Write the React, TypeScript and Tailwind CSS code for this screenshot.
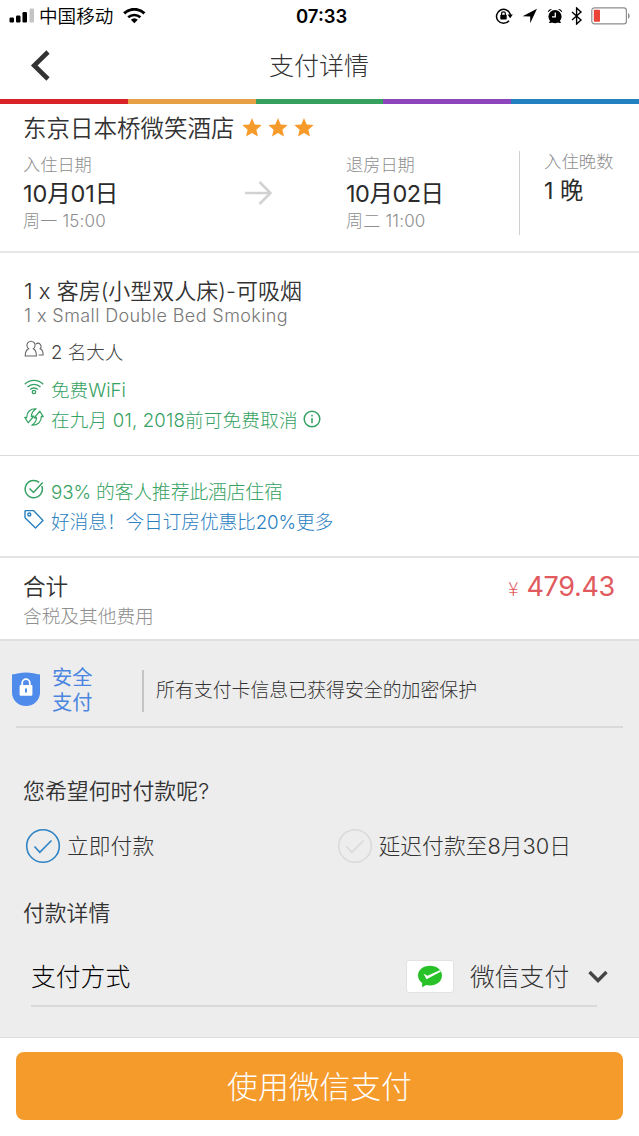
import React from "react";

function StatusBar() {
  return (
    <div className="flex h-8 items-center text-black">
      <svg className="ml-[9px] h-4 w-[25px]" viewBox="0 0 25 16">
        <rect x="0.5" y="9.5" width="4.5" height="5" rx="1.2" />
        <rect x="7" y="7.5" width="4.5" height="7" rx="1.2" />
        <rect x="13.5" y="4" width="4.5" height="10.5" rx="1.2" />
        <rect x="20.5" y="0.5" width="4.5" height="14" rx="1.2" fill="#c4c4c4" />
      </svg>
      <span className="ml-[5px] w-[75px] whitespace-nowrap text-[18.6px] leading-8 font-[350]">中国移动</span>
      <svg className="ml-[9px] h-4 w-6" viewBox="0 0 24 16" fill="none" stroke="#000">
        <path d="M1.2 5.4a14.6 14.6 0 0 1 20.2 0" strokeWidth="3" />
        <path d="M5.2 9.3a9.2 9.2 0 0 1 12.2 0" strokeWidth="2.6" />
        <path d="M11.3 15.2 7.8 11.8a5.2 5.2 0 0 1 7 0z" fill="#000" stroke="none" />
      </svg>
      <span className="ml-[149px] w-[57px] whitespace-nowrap text-[18.5px] leading-8 font-semibold">07:33</span>
      <svg className="ml-[142px] h-[18px] w-[18px]" viewBox="0 0 18 18" fill="none" stroke="#000">
        <path d="M14 13.7A7 7 0 1 1 15.4 8" strokeWidth="1.5" />
        <path d="M12.6 7.6h5.2l-2.6 3.6z" fill="#000" stroke="none" />
        <rect x="5.3" y="7.8" width="6.4" height="4.6" rx="0.6" fill="#000" stroke="none" />
        <path d="M6.6 8V6.8a1.9 1.9 0 0 1 3.8 0V8" strokeWidth="1.2" />
      </svg>
      <svg className="ml-[9px] h-4 w-4" viewBox="0 0 16 16">
        <path d="M15 0.8 8.2 15.2V8.6L0.6 8.3z" />
      </svg>
      <svg className="ml-[9px] h-4 w-4" viewBox="0 0 16 16">
        <circle cx="8" cy="8.6" r="6.6" />
        <path d="M0.8 4.6A4 4 0 0 1 5 1zM15.2 4.6A4 4 0 0 0 11 1z" />
        <path d="M3.2 12.5 2 15h3zM12.8 12.5 14 15h-3z" />
        <path d="M8.3 4.4v4.4H5" stroke="#fff" strokeWidth="1.3" fill="none" />
      </svg>
      <svg className="ml-2 h-[18px] w-3" viewBox="0 0 12 18" fill="none" stroke="#000" strokeWidth="1.4">
        <path d="m1 5 9 8-4.4 4V1L10 5l-9 8" />
      </svg>
      <svg className="ml-2 h-[18px] w-10" viewBox="0 0 40 18">
        <rect x="0.8" y="0.8" width="34.6" height="16" rx="2.6" fill="none" stroke="#8f8f8f" strokeWidth="1.2" />
        <rect x="2.8" y="2.8" width="6.2" height="12" rx="0.8" fill="#ea4438" />
        <path d="M37 6c2.2.8 2.2 5 0 5.8z" fill="#8f8f8f" />
      </svg>
    </div>
  );
}

function Header() {
  return (
    <header className="flex h-[67px] items-center">
      <svg className="ml-[30px] h-8 w-5" viewBox="0 0 20 32" fill="none" stroke="#333" strokeWidth="4.6">
        <path d="M18 2 4.2 15.5 18 29" />
      </svg>
      <h1 className="ml-[219px] text-[25px] leading-8 font-light text-[#333]">支付详情</h1>
    </header>
  );
}

function Stripe() {
  return (
    <div className="grid h-[5px] grid-cols-5">
      <div className="bg-[#d92128]" />
      <div className="bg-[#e8a046]" />
      <div className="bg-[#36a05f]" />
      <div className="bg-[#8c45bd]" />
      <div className="bg-[#2481bf]" />
    </div>
  );
}

function Star() {
  return (
    <svg className="h-5 w-5" viewBox="0 0 20 20" fill="#f59b2c">
      <path d="m10 0 2.7 6.500 7 .6-5.300 4.600 1.600 6.900L10 15l-6 3.600 1.600-6.900L.3 7.100l7-.6z" />
    </svg>
  );
}

function Stay({ label, date, time }: { label: string; date: React.ReactNode; time: string }) {
  return (
    <div className="whitespace-nowrap">
      <div className="text-[17.2px] leading-6 font-light text-[#8e8e8e]">{label}</div>
      <div className="text-[23.5px] leading-[34px] text-[#2b2b2b]">{date}</div>
      <div className="text-[17px] leading-5 font-light tracking-[0.2px] text-[#8e8e8e]">{time}</div>
    </div>
  );
}

function Hotel() {
  return (
    <section className="h-[149px] border-b-2 border-[#e6e6e6] pl-6">
      <div className="flex h-[49px] items-center">
        <h2 className="-ml-px w-[213px] whitespace-nowrap text-[23.5px] leading-8 font-[350] text-[#333]">东京日本桥微笑酒店</h2>
        <div className="mb-0.5 ml-[6px] flex gap-[6px]">
          <Star />
          <Star />
          <Star />
        </div>
      </div>
      <div className="flex items-start">
        <div className="-ml-px w-[222px]">
          <Stay label="入住日期" date={<span className="tracking-[-0.1px]">10月01日</span>} time="周一 15:00" />
        </div>
        <svg className="mt-[28px] h-6 w-[27px]" viewBox="0 0 27 24" fill="none" stroke="#d2d2d2" strokeWidth="2.6">
          <path d="M0 12h25M14.5 1 25.5 12l-11 11" />
        </svg>
        <div className="ml-[74px] w-[173px]">
          <Stay label="退房日期" date={<span className="tracking-[-0.5px]">10月02日</span>} time="周二 11:00" />
        </div>
        <div className="-mt-[2px] h-[84px] w-px bg-[#cfcfcf]" />
        <div className="-mt-[3px] ml-6 whitespace-nowrap">
          <div className="text-[17.4px] leading-6 font-light text-[#8e8e8e]">入住晚数</div>
          <div className="text-[23.3px] leading-[34px] text-[#2b2b2b]">1 晚</div>
        </div>
      </div>
    </section>
  );
}

function Room() {
  return (
    <section className="h-[203px] border-b border-[#dcdcdc] pt-[22px] pl-6 whitespace-nowrap">
      <h3 className="text-[22px] leading-8 font-[350] text-[#333]">1 x 客房(小型双人床)-可吸烟</h3>
      <p className="mt-[1px] text-[18px] leading-4 font-light tracking-[0.4px] text-[#777]">1 x Small Double Bed Smoking</p>
      <div className="mt-[13px] flex h-[30px] items-center">
        <svg className="mb-1.5 h-[18px] w-5" viewBox="0 0 20 18" fill="none" stroke="#666" strokeWidth="1.1">
          <path d="M4.600 8.700a4.100 4.100 0 1 1 4.800 0c2 1 3 3.500 3 7.300H1.200c0-3.800 1.200-6.300 3.400-7.300z" />
          <path d="M11.800 4.200a3.100 3.100 0 1 1 4.300 4.600c2 .7 3 2.700 3 6.200h-4.500" />
        </svg>
        <span className="ml-[7px] text-[18.6px] leading-8 font-light text-[#444]">2 名大人</span>
      </div>
      <div className="mt-[8px] flex h-[30px] items-center text-[#35a162]">
        <svg className="mb-1.5 h-4 w-5" viewBox="0 0 20 16" fill="none" stroke="currentColor" strokeWidth="1.3">
          <path d="M.8 5.200a13 13 0 0 1 18.400 0M3.500 8a9.200 9.200 0 0 1 13 0M6.200 10.500a5.500 5.500 0 0 1 7.600 0" />
          <circle cx="10" cy="13" r="1.7" />
        </svg>
        <span className="ml-[7px] text-[18.6px] leading-8 font-light">免费WiFi</span>
      </div>
      <div className="flex h-[30px] items-center text-[#35a162]">
        <svg className="mb-1.5 h-[18px] w-5" viewBox="0 0 20 18" fill="none" stroke="currentColor" strokeWidth="1.2" strokeLinejoin="round">
          <path d="M12.200.8C6.500.4 2.500 4 2.700 9.600L.8 9.400l3.400 5.400L9.800 8l-2.400.4C7.500 5.400 9 2.700 12.200.8z" />
          <path d="M7.800 17.200c5.700.4 9.700-3.200 9.500-8.800l1.900.2-3.400-5.400L10.200 10l2.400-.4c-.1 3-1.600 5.700-4.800 7.600z" />
        </svg>
        <span className="ml-[7px] w-[247px] text-[18.6px] leading-8 font-light tracking-[0.18px]">在九月 01, 2018前可免费取消</span>
        <svg className="mb-0.5 ml-[5px] h-[18px] w-[18px]" viewBox="0 0 18 18" fill="none" stroke="currentColor" strokeWidth="1.5">
          <circle cx="9" cy="9" r="7.8" />
          <path d="M9 8v5.300M9 4.800v1.700" />
        </svg>
      </div>
    </section>
  );
}

function Notes() {
  return (
    <section className="h-[102px] border-b-2 border-[#e4e4e4] pt-[22px] pl-6 whitespace-nowrap">
      <div className="flex h-[30px] items-center text-[#35a162]">
        <svg className="mb-2 h-5 w-5" viewBox="0 0 20 20" fill="none" stroke="currentColor" strokeWidth="1.5">
          <path d="M17.800 7A8.600 8.600 0 1 1 15.200 3.400M5.500 9.500l4 4L18.700 3.500" />
        </svg>
        <span className="ml-[7px] text-[18.8px] leading-8 font-light tracking-[-0.12px]">93% 的客人推荐此酒店住宿</span>
      </div>
      <div className="flex h-[30px] items-center text-[#2a80bf]">
        <svg className="mb-2 h-5 w-5" viewBox="0 0 20 20" fill="none" stroke="currentColor" strokeWidth="1.4" strokeLinejoin="round">
          <path d="M1 2.200v6.500L11.500 19 19 11.500 9.500 1.600H1.600z" />
          <circle cx="5.3" cy="5.5" r="1.5" />
        </svg>
        <span className="ml-[7px] text-[18.8px] leading-8 font-light tracking-[-0.17px]">好消息！今日订房优惠比20%更多</span>
      </div>
    </section>
  );
}

function Total() {
  return (
    <section className="h-[83px] border-b-2 border-[#e0e0e0] pt-[13px] pr-6 pl-6 whitespace-nowrap">
      <div className="flex h-8 items-center justify-between">
        <span className="-ml-px text-[22.6px] leading-8 font-[350] text-[#333]">合计</span>
        <span className="flex items-center text-[#e05a5e]">
          <span className="mt-0.5 mr-2 font-['Noto_Sans_CJK_SC'] text-[19px] leading-8 font-light">¥</span>
          <span className="text-[27px] leading-8 font-normal tracking-[-0.3px]">479.43</span>
        </span>
      </div>
      <div className="mt-px -ml-px text-[18.7px] leading-[26px] font-light text-[#8e8e8e]">含税及其他费用</div>
    </section>
  );
}

function Security() {
  return (
    <div className="mx-4 flex h-[87px] items-center border-b-2 border-[#d9d9d9] whitespace-nowrap">
      <svg className="mt-3 -ml-1 h-[35px] w-7 shrink-0" viewBox="0 0 28 35">
        <path d="M0 2.500C4 1.800 9 .5 14 .5s10 1.300 14 2v18C28 28 22 34 14 34S0 28 0 20.500z" fill="#4f8bea" />
        <rect x="7.6" y="13" width="12.8" height="10.8" rx="1" fill="#fff" />
        <path d="M10.200 13.500V11a3.800 3.800 0 0 1 7.600 0v2.500" fill="none" stroke="#fff" strokeWidth="1.8" />
        <path d="M14 16.500v4" stroke="#4f8bea" strokeWidth="2" />
      </svg>
      <div className="mt-[12px] ml-3 w-[43px] text-[20.3px] leading-[25px] font-normal text-[#4a86df]">
        <div>安全</div>
        <div>支付</div>
      </div>
      <div className="mt-[14px] ml-[47px] h-[42px] w-[2px] bg-[#c4c4c4]" />
      <span className="mt-3.5 ml-3 text-[18.9px] leading-8 font-light text-[#333]">所有支付卡信息已获得安全的加密保护</span>
    </div>
  );
}

function Option({ label, checked }: { label: string; checked?: boolean }) {
  return (
    <div className="flex h-9 items-center whitespace-nowrap">
      <svg
        className={checked ? "h-9 w-9 text-[#2f83c2]" : "h-9 w-9 text-[#dadada]"}
        viewBox="0 0 36 36"
        fill="none"
        stroke="currentColor"
        strokeWidth="1.6"
      >
        <circle cx="18" cy="18" r="16.3" />
        <path d="m9.500 18.500 5.300 5.800L26.500 12.500" />
      </svg>
      <span className="ml-[6px] text-[21.8px] leading-9 font-light text-[#333]">{label}</span>
    </div>
  );
}

function Payment() {
  return (
    <section className="h-[396px] bg-[#ededed]">
      <Security />
      <h3 className="mt-[47px] ml-[23px] text-[21.9px] leading-8 font-[350] text-[#333]">您希望何时付款呢?</h3>
      <div className="mt-[21px] ml-[25px] flex">
        <div className="w-[311.500px]">
          <Option label="立即付款" checked />
        </div>
        <Option label="延迟付款至8月30日" />
      </div>
      <h3 className="mt-[33px] ml-[23px] text-[21.8px] leading-8 font-[350] text-[#333]">付款详情</h3>
      <div className="mt-[19px] mr-[42px] ml-[31px] flex h-[59px] items-center border-b-2 border-[#d9d9d9] whitespace-nowrap">
        <span className="w-[375px] shrink-0 text-[24.8px] leading-8 font-light text-black">支付方式</span>
        <div className="flex h-[33px] w-12 shrink-0 items-center justify-center rounded-[3px] border border-[#e2e2e2] bg-white">
          <svg className="h-[23px] w-[26px]" viewBox="0 0 26 23">
            <path d="M13 .8C6.300.8 1 5 1 10.500c0 3.200 1.700 5.800 4.200 7.500L5 22.300l4.200-2.200c1.200.3 2.500.4 3.800.4 6.700 0 12-4.300 12-10S19.700.8 13 .8z" fill="#28c228" />
            <path d="M6.500 8.800 9.500 14.200 24 6.600 22.800 5.200 10.500 10.800z" fill="#fff" />
          </svg>
        </div>
        <span className="ml-4 w-[101px] shrink-0 text-[24.8px] leading-8 font-light text-[#333]">微信支付</span>
        <svg className="mb-0.5 ml-[17px] h-4 w-5 shrink-0" viewBox="0 0 20 16" fill="none" stroke="#444" strokeWidth="3.4">
          <path d="m1.500 4 8.500 8.500L18.500 4" />
        </svg>
      </div>
    </section>
  );
}

export default function App() {
  return (
    <main lang="zh-CN" className="flex h-[1136px] w-[639px] flex-col overflow-hidden bg-white font-['Inter','Noto_Sans_CJK_SC',sans-serif]">
      <StatusBar />
      <Header />
      <Stripe />
      <Hotel />
      <Room />
      <Notes />
      <Total />
      <Payment />
      <footer className="flex-1 border-t border-[#dedede] px-4 pt-[14px]">
        <button className="block h-[68px] w-full rounded-lg bg-[#f59b2c] pt-px text-[30.8px] leading-[68px] font-light text-white">使用微信支付</button>
      </footer>
    </main>
  );
}
